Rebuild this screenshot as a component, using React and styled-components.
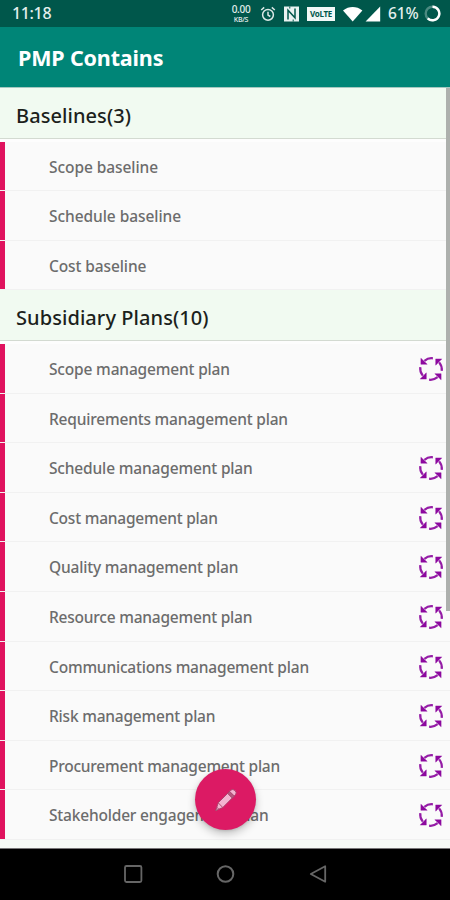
import React from "react";
import styled, { createGlobalStyle } from "styled-components";

const GlobalStyle = createGlobalStyle`
  * { box-sizing: border-box; }
  body { margin: 0; background: #fafafa; overflow: hidden; }
`;

const Screen = styled.div`
  position: relative;
  display: flex;
  flex-direction: column;
  width: 450px;
  height: 900px;
  overflow: hidden;
  background: #fafafa;
  font-family: "Noto Sans", "Open Sans", sans-serif;
`;

const StatusBar = styled.header`
  display: flex;
  align-items: center;
  justify-content: space-between;
  flex: none;
  height: 27px;
  padding: 0 9px 0 12px;
  background: #00574b;
  color: #e4efed;
`;

const Clock = styled.span`
  font-size: 16px;
  font-weight: 500;
  line-height: 27px;
  letter-spacing: -0.35px;
`;

const StatusIcons = styled.div`
  display: flex;
  align-items: center;
  height: 27px;
`;

const NetSpeed = styled.div`
  display: flex;
  flex-direction: column;
  align-items: center;
  width: 20px;
  margin-right: 9px;
  font-size: 10px;
  font-weight: 500;
  line-height: 11px;
  letter-spacing: -0.3px;
`;

const NetUnit = styled.span`
  font-size: 7px;
  line-height: 9px;
`;

const VolteBadge = styled.span`
  width: 28px;
  height: 14px;
  margin: 1px 8px 0 8px;
  background: #f2f8f7;
  color: #00574b;
  font-size: 8px;
  font-weight: 700;
  line-height: 14px;
  text-align: center;
  letter-spacing: -0.3px;
`;

const Battery = styled.span`
  width: 32px;
  margin: 0 4px 0 7px;
  font-size: 15.5px;
  font-weight: 500;
  line-height: 27px;
  letter-spacing: -0.1px;
  white-space: nowrap;
`;

const AppBar = styled.div`
  display: flex;
  align-items: center;
  flex: none;
  height: 60px;
  padding: 2px 18px 0;
  background: #008577;
`;

const Title = styled.h1`
  margin: 0;
  color: #fff;
  font-size: 21.5px;
  font-weight: 700;
  line-height: 30px;
  letter-spacing: -0.16px;
`;

const List = styled.main`
  flex: 1;
  min-height: 0;
  padding-top: 1px;
  overflow: hidden;
  background: #a5c8c1;
`;

const GroupHeader = styled.div`
  height: 53.6px;
  border-bottom: 3px solid #fdfdfd;
`;

const GroupTitle = styled.h2`
  height: 50.6px;
  margin: 0;
  padding-left: 16px;
  border-bottom: 1px solid #d3dad1;
  background: #f1faf1;
  color: #1c1f1c;
  font-size: 20px;
  font-weight: 500;
  line-height: 55px;
  letter-spacing: 0.07px;
`;

const Row = styled.div`
  display: flex;
  align-items: center;
  justify-content: space-between;
  height: 49.6px;
  padding: 1.4px 6px 0 49px;
  border-bottom: 1px solid #f1f1f1;
  background: #fafafa;
  box-shadow: inset 5px 0 #e0125e;
`;

const RowLabel = styled.span`
  color: #6c6c6c;
  font-size: 15.5px;
  font-weight: 500;
  line-height: 24px;
  letter-spacing: ${(p) => p.$tracking}px;
  white-space: nowrap;
`;

const Tail = styled.div`
  height: 12px;
  background: #f6fbf6;
`;

const ScrollThumb = styled.div`
  position: absolute;
  top: 88px;
  right: 0;
  width: 4px;
  height: 523px;
  background: #adb0ad;
`;

const Fab = styled.button`
  position: absolute;
  left: 195px;
  top: 769px;
  display: flex;
  align-items: center;
  justify-content: center;
  width: 61px;
  height: 61px;
  padding: 0;
  border: 0;
  border-radius: 50%;
  background: #dc1a64;
  box-shadow: 0 4px 8px rgba(0, 0, 0, 0.22), 0 1px 3px rgba(0, 0, 0, 0.12);
`;

const NavBar = styled.nav`
  display: flex;
  align-items: center;
  justify-content: space-between;
  flex: none;
  height: 52px;
  padding: 0 122px 1px 123px;
  border-top: 1px solid #777;
  background: #000;
`;

const IconSlot = styled.span`
  display: flex;
  margin-right: 8px;
`;

const AlarmIcon = () => (
  <svg width="16" height="16" viewBox="0 0 16 16" fill="none" stroke="#dce9e7" strokeWidth="1.5">
    <circle cx="8" cy="8.8" r="5.4" />
    <path d="M8 5.7v3.4l2.3 1.4M1.2 4l3-2.6M14.8 4l-3-2.6" />
  </svg>
);

const NfcIcon = () => (
  <svg width="15" height="16" viewBox="0 0 15 16">
    <path fill="#e9f2f1" d="M0 .5h15v15H0z" />
    <path fill="none" stroke="#00574b" strokeWidth="1.5" d="M4 13.4V4.2l7 7.6V2.6" />
    <path fill="none" stroke="#00574b" strokeWidth="1" d="M5.8.5v2M9.2 13.5v2" />
  </svg>
);

const SignalIcons = () => (
  <svg width="38" height="16" viewBox="0 0 38 16" fill="#fff">
    <path d="M0 4.5C6-.1 13.4-.1 19.4 4.5L9.7 15.6z" />
    <path d="M37.2.6v15H22.6z" />
  </svg>
);

const BatteryRing = () => (
  <svg width="17" height="17" viewBox="0 0 17 17" fill="none" strokeWidth="2.4">
    <circle cx="8.5" cy="8.5" r="6.8" stroke="#4b8a81" />
    <path stroke="#fff" d="M8.5 1.7a6.8 6.8 0 1 1-4.8 11.6" />
  </svg>
);

const CycleIcon = () => (
  <svg width="26" height="26" viewBox="0 0 26 26">
    {[0, 90, 180, 270].map((angle) => (
      <g key={angle} transform={`rotate(${angle} 13 13)`}>
        <path d="M14.9 2.3Q10.4 1.6 6.4 4.8" fill="none" stroke="#951ca6" strokeWidth="2.2" />
        <path d="M2.9 2.2V8.3H9.2z" fill="#8d099f" stroke="#8d099f" strokeWidth=".4" />
      </g>
    ))}
  </svg>
);

const PencilIcon = () => (
  <svg width="24" height="24" viewBox="0 0 24 24">
    <g stroke="#a8406a" strokeWidth=".9" strokeLinejoin="round">
      <path d="M1.8 22.4l2.4-7.6L16.8 2.2q2-1.7 4.2.4 2.2 2.2.4 4.2L8.8 19.5z" fill="#f3b4d0" />
      <path d="M13.6 5.4l4.8 4.8 2-2.1-4.9-4.8z" fill="#b55a80" />
      <path d="M4.2 14.8l4.6 4.7" fill="none" />
      <path d="M1.8 22.4l1-3.2 2.1 2.1z" fill="#f3bfd4" />
    </g>
  </svg>
);

const SquareIcon = () => (
  <svg width="20" height="20" viewBox="0 0 20 20">
    <rect x="2" y="2" width="16.4" height="16" rx="1.5" fill="none" stroke="#666" strokeWidth="1.8" />
  </svg>
);

const CircleIcon = () => (
  <svg width="20" height="20" viewBox="0 0 20 20">
    <circle cx="9.5" cy="10" r="7.8" fill="none" stroke="#666" strokeWidth="2" />
  </svg>
);

const BackIcon = () => (
  <svg width="20" height="20" viewBox="0 0 20 20">
    <path d="M17.2 2.3v15.4L2.8 10z" fill="none" stroke="#666" strokeWidth="1.8" strokeLinejoin="round" />
  </svg>
);

const groups = [
  {
    title: "Baselines(3)",
    items: [
      { label: "Scope baseline", tracking: -0.07 },
      { label: "Schedule baseline", tracking: -0.06 },
      { label: "Cost baseline", tracking: -0.11 },
    ],
  },
  {
    title: "Subsidiary Plans(10)",
    items: [
      { label: "Scope management plan", tracking: -0.17, cycle: true },
      { label: "Requirements management plan", tracking: -0.2 },
      { label: "Schedule management plan", tracking: -0.16, cycle: true },
      { label: "Cost management plan", tracking: -0.22, cycle: true },
      { label: "Quality management plan", tracking: -0.19, cycle: true },
      { label: "Resource management plan", tracking: -0.22, cycle: true },
      { label: "Communications management plan", tracking: -0.2, cycle: true },
      { label: "Risk management plan", tracking: -0.21, cycle: true },
      { label: "Procurement management plan", tracking: -0.23, cycle: true },
      { label: "Stakeholder engagement plan", tracking: -0.19, cycle: true },
    ],
  },
];

export default function App() {
  return (
    <Screen>
      <GlobalStyle />
      <StatusBar>
        <Clock>11:18</Clock>
        <StatusIcons>
          <NetSpeed>
            <span>0.00</span>
            <NetUnit>KB/S</NetUnit>
          </NetSpeed>
          <IconSlot>
            <AlarmIcon />
          </IconSlot>
          <NfcIcon />
          <VolteBadge>VoLTE</VolteBadge>
          <SignalIcons />
          <Battery>61%</Battery>
          <BatteryRing />
        </StatusIcons>
      </StatusBar>
      <AppBar>
        <Title>PMP Contains</Title>
      </AppBar>
      <List>
        {groups.map((group) => (
          <section key={group.title}>
            <GroupHeader>
              <GroupTitle>{group.title}</GroupTitle>
            </GroupHeader>
            {group.items.map((item) => (
              <Row key={item.label}>
                <RowLabel $tracking={item.tracking}>{item.label}</RowLabel>
                {item.cycle && <CycleIcon />}
              </Row>
            ))}
          </section>
        ))}
        <Tail />
      </List>
      <NavBar>
        <SquareIcon />
        <CircleIcon />
        <BackIcon />
      </NavBar>
      <ScrollThumb />
      <Fab aria-label="Edit">
        <PencilIcon />
      </Fab>
    </Screen>
  );
}
